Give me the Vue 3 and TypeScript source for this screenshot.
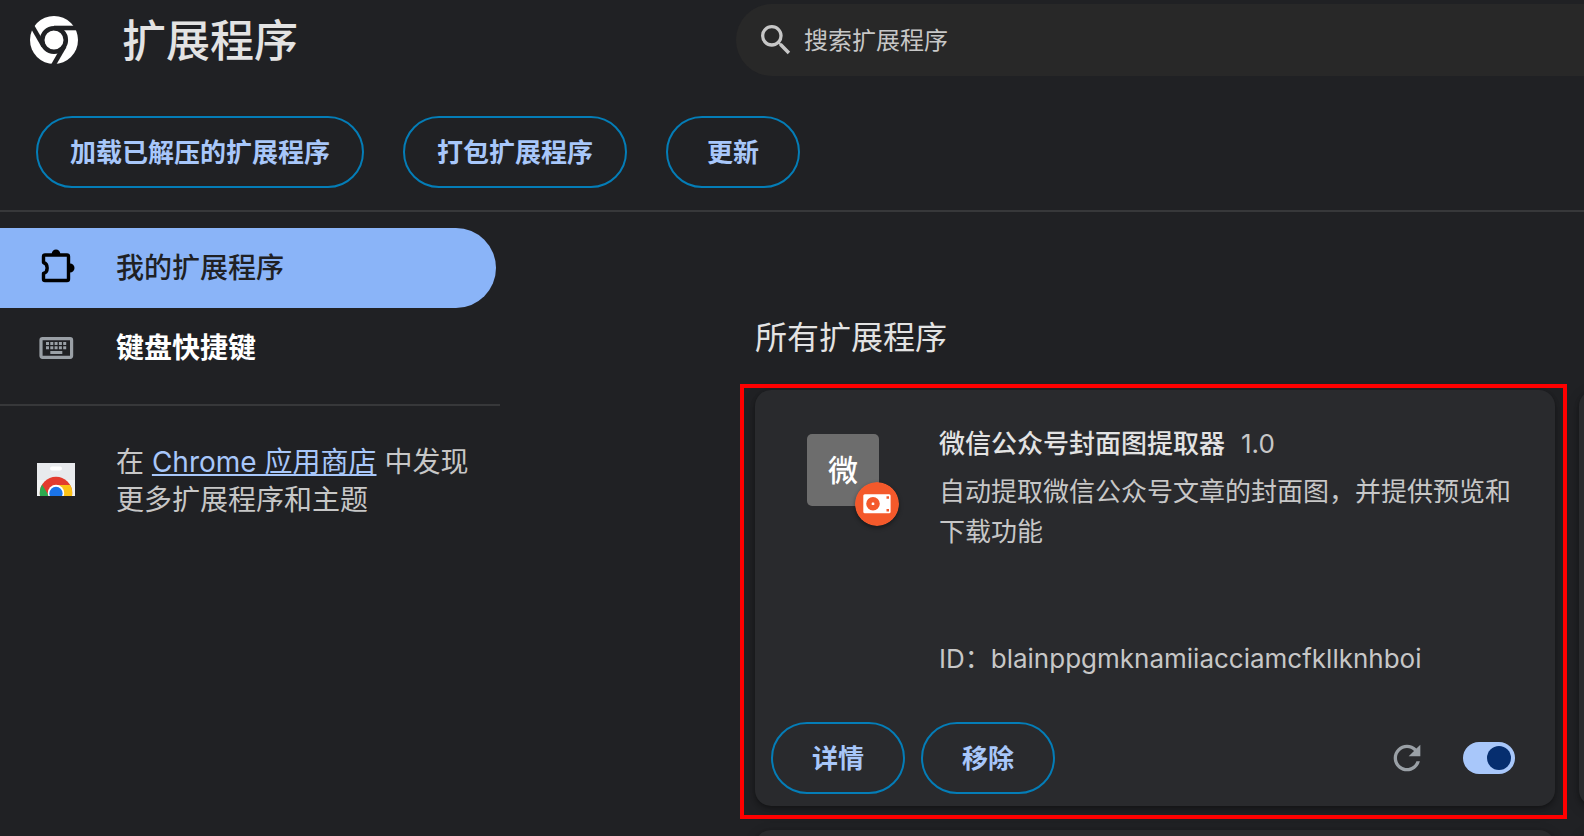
<script setup lang="ts">
import { ref } from 'vue'

interface Extension {
  name: string
  version: string
  description: string
  id: string
  glyph: string
}

const query = ref('')
const enabled = ref(true)
const actions: string[] = ['加载已解压的扩展程序', '打包扩展程序', '更新']
const extension: Extension = {
  name: '微信公众号封面图提取器',
  version: '1.0',
  description: '自动提取微信公众号文章的封面图，并提供预览和下载功能',
  id: 'blainppgmknamiiacciamcfkllknhboi',
  glyph: '微',
}
</script>

<template>
  <div class="page">
    <header class="header">
      <div class="brand">
        <svg class="logo" viewBox="-24 -24 48 48" aria-hidden="true">
          <circle r="24" fill="#fff" />
          <g fill="none" stroke="#202124" stroke-width="4.6">
            <circle r="11.8" />
            <path d="M0-12H25" />
            <path d="M0-12H25" transform="rotate(120)" />
            <path d="M0-12H25" transform="rotate(240)" />
          </g>
        </svg>
        <h1>扩展程序</h1>
      </div>
      <label class="search">
        <svg viewBox="0 0 24 24" aria-hidden="true">
          <path fill="#c7c7c7" d="M15.5 14h-.79l-.28-.27A6.47 6.47 0 0 0 16 9.5 6.5 6.5 0 1 0 9.5 16c1.61 0 3.09-.59 4.23-1.57l.27.28v.79l5 4.99L20.49 19l-4.99-5zm-6 0C7.01 14 5 11.99 5 9.5S7.01 5 9.5 5 14 7.01 14 9.5 11.99 14 9.5 14z" />
        </svg>
        <input v-model="query" type="text" placeholder="搜索扩展程序" aria-label="搜索扩展程序" />
      </label>
    </header>

    <div class="toolbar">
      <button v-for="label in actions" :key="label" type="button" class="pill">{{ label }}</button>
    </div>

    <div class="body">
      <aside class="sidebar">
        <nav>
          <a href="#extensions" class="nav-item active">
            <svg viewBox="0 2 36 36" aria-hidden="true">
              <path fill="none" stroke="#000" stroke-width="3.4" stroke-linejoin="round" d="M5 7H27A1.5 1.5 0 0 1 28.5 8.5V31A1.5 1.5 0 0 1 27 32.500H5A1.5 1.5 0 0 1 3.500 31V25.500C8.400 24 8.400 16 3.500 14.500V8.500A1.5 1.5 0 0 1 5 7Z" />
              <path d="M11.700 6a4.300 4.500 0 0 1 8.600 0ZM30 15.500a4.500 4.500 0 0 1 0 9Z" />
            </svg>
            <span>我的扩展程序</span>
          </a>
          <a href="#shortcuts" class="nav-item">
            <svg viewBox="0 0 36 36" aria-hidden="true">
              <rect x="1" y="8.700" width="30.600" height="18.600" rx="1.500" fill="none" stroke="#9aa0a6" stroke-width="3.200" />
              <g fill="#9aa0a6">
                <path d="M6 12h3v3H6zM10.300 12h3v3h-3zM14.600 12h3v3h-3zM18.900 12h3v3h-3zM23.200 12h3v3h-3z" />
                <path d="M6 16.200h3v3H6zM10.300 16.200h3v3h-3zM14.600 16.200h3v3h-3zM18.900 16.200h3v3h-3zM23.200 16.200h3v3h-3z" />
                <path d="M10.300 21h12v3h-12z" />
              </g>
            </svg>
            <span>键盘快捷键</span>
          </a>
        </nav>
        <div class="discover">
          <svg viewBox="0 0 38 33" aria-hidden="true">
            <defs>
              <clipPath id="wheel"><circle cx="19" cy="30" r="16.200" /></clipPath>
            </defs>
            <path fill="#f1f3f4" d="M0 0h38v33H0z" />
            <path fill="#e8eaed" d="M0 0h38v17H0z" />
            <rect x="13" y="3.500" width="12" height="4" rx="2" fill="#fff" />
            <g clip-path="url(#wheel)">
              <path fill="#e33b2e" d="M0 10h38v23H0z" />
              <path fill="#fbc116" d="M19 22h19v11H19z" />
              <path fill="#2da94f" d="M0 17 5 21.500 12 33H0z" />
            </g>
            <circle cx="19" cy="30" r="8.200" fill="#fff" />
            <circle cx="19" cy="30.300" r="6.600" fill="#1a73e8" />
          </svg>
          <p>在 <a href="#webstore">Chrome 应用商店</a> 中发现<br />更多扩展程序和主题</p>
        </div>
      </aside>

      <main class="content">
        <h2>所有扩展程序</h2>
        <div class="grid">
          <article class="card">
            <div class="summary">
              <div class="icon">
                <span>{{ extension.glyph }}</span>
                <svg class="badge" viewBox="0 0 44 44" aria-hidden="true">
                  <circle cx="22" cy="22" r="22" fill="#f4592b" />
                  <rect x="8.300" y="12.300" width="27.300" height="19" rx="1.500" fill="#fff" />
                  <circle cx="18" cy="21.800" r="6.800" fill="#f4592b" />
                  <rect x="16.700" y="20.500" width="2.600" height="2.600" rx=".6" fill="#fff" />
                  <path fill="#f4592b" d="M31.500 14.200h2.500v2.500h-2.500zM31.500 27h2.500v2.500h-2.500z" />
                </svg>
              </div>
              <div class="details">
                <h3>{{ extension.name }}<span>{{ extension.version }}</span></h3>
                <p class="description">{{ extension.description }}</p>
                <p class="identifier">ID：{{ extension.id }}</p>
              </div>
            </div>
            <div class="controls">
              <button type="button" class="pill">详情</button>
              <button type="button" class="pill">移除</button>
              <button type="button" class="reload" aria-label="重新加载">
                <svg viewBox="0 0 24 24" aria-hidden="true">
                  <path fill="#9aa0a6" d="M17.650 6.350C16.200 4.900 14.210 4 12 4c-4.420 0-7.990 3.580-7.990 8s3.570 8 7.990 8c3.730 0 6.840-2.550 7.730-6h-2.080c-.82 2.330-3.040 4-5.650 4-3.310 0-6-2.690-6-6s2.690-6 6-6c1.660 0 3.140.69 4.220 1.780L13 11h7V4l-2.350 2.350z" />
                </svg>
              </button>
              <input v-model="enabled" type="checkbox" role="switch" class="toggle" aria-label="启用" />
            </div>
            <div class="highlight"></div>
          </article>
          <article class="card"></article>
          <article class="card"></article>
          <article class="card"></article>
        </div>
      </main>
    </div>
  </div>
</template>

<style>
html,
body {
  margin: 0;
  background: #202124;
}
</style>

<style scoped>
.page {
  box-sizing: border-box;
  height: 100vh;
  display: flex;
  flex-direction: column;
  overflow: hidden;
  background: #202124;
  color: #e3e3e3;
  font-family: Inter, "Noto Sans CJK SC", sans-serif;
  font-size: 26px;
}

h1,
h2,
h3,
p {
  margin: 0;
}

button,
input {
  font: inherit;
}

.header {
  display: flex;
  align-items: center;
  height: 80px;
}

.brand {
  box-sizing: border-box;
  flex: 0 0 736px;
  display: flex;
  align-items: center;
  gap: 44px;
  padding-left: 30px;
}

.logo {
  width: 48px;
  height: 48px;
}

h1 {
  padding-top: 2px;
  font-size: 44px;
  line-height: 64px;
  font-weight: 500;
}

.search {
  flex: 1;
  display: flex;
  align-items: center;
  gap: 8px;
  height: 72px;
  padding-left: 20px;
  border-radius: 36px 0 0 36px;
  background: #282828;
}

.search svg {
  width: 40px;
  height: 40px;
}

.search input {
  flex: 1;
  min-width: 0;
  padding: 2px 0 0;
  border: 0;
  outline: 0;
  background: none;
  color: #e3e3e3;
  font-size: 24px;
  line-height: 36px;
}

.search input::placeholder {
  color: #c7c7c7;
  opacity: 1;
}

.toolbar {
  display: flex;
  gap: 39px;
  padding: 36px 36px 22px;
  border-bottom: 2px solid #37383a;
}

.pill {
  box-sizing: border-box;
  min-width: 134px;
  height: 72px;
  padding: 0 32px 4px;
  border: 2px solid #047db7;
  border-radius: 36px;
  background: transparent;
  color: #a8c7fa;
  font-size: 26px;
  font-weight: 700;
  white-space: nowrap;
}

.body {
  flex: 1;
  min-height: 0;
  display: flex;
}

.sidebar {
  flex: 0 0 500px;
}

nav {
  padding: 16px 4px 16px 0;
  border-bottom: 2px solid #37383a;
}

.nav-item {
  display: flex;
  align-items: center;
  gap: 40px;
  height: 80px;
  padding-left: 40px;
  color: #fff;
  font-size: 28px;
  font-weight: 700;
  text-decoration: none;
}

.nav-item svg {
  width: 36px;
  height: 36px;
  overflow: visible;
}

.nav-item span {
  padding-bottom: 4px;
}

.nav-item.active {
  border-radius: 0 40px 40px 0;
  background: #8ab4f8;
  color: #202124;
  font-weight: 500;
}

.discover {
  display: flex;
  align-items: center;
  gap: 41px;
  padding: 37px 24px 0 37px;
  color: #c7c7c7;
  font-size: 28px;
  line-height: 38px;
}

.discover svg {
  flex: none;
  width: 38px;
  height: 33px;
  margin-bottom: 4px;
}

.discover p {
  white-space: nowrap;
}

.discover a {
  color: #a8c7fa;
  text-decoration-thickness: 2px;
  text-underline-offset: 2px;
  text-decoration-skip-ink: none;
}

.content {
  flex: 1;
  min-width: 0;
  padding: 106px 0 0 255px;
}

h2 {
  margin-bottom: 32px;
  font-size: 32px;
  line-height: 40px;
  font-weight: 400;
}

.grid {
  display: grid;
  grid-template-columns: repeat(2, minmax(800px, 1fr));
  gap: 24px;
}

.card {
  position: relative;
  box-sizing: border-box;
  display: flex;
  flex-direction: column;
  min-height: 416px;
  padding: 32px 16px 12px;
  border-radius: 16px;
  background: #292a2d;
  box-shadow: 0 2px 4px rgba(0, 0, 0, 0.3), 0 4px 12px 2px rgba(0, 0, 0, 0.15);
}

.summary {
  flex: 1;
  display: flex;
  gap: 60px;
  padding: 0 24px 0 36px;
}

.icon {
  position: relative;
  flex: none;
  display: flex;
  align-items: center;
  justify-content: center;
  width: 72px;
  height: 72px;
  margin-top: 12px;
  border-radius: 5px;
  background: #6d6d6d;
  color: #fff;
  font-size: 30px;
  font-weight: 500;
}

.icon span {
  padding-bottom: 5px;
}

.badge {
  position: absolute;
  right: -20px;
  bottom: -20px;
  width: 44px;
  height: 44px;
  border-radius: 50%;
  box-shadow: 0 2px 4px rgba(0, 0, 0, 0.4);
}

.details {
  flex: 1;
  min-width: 0;
  display: flex;
  flex-direction: column;
  padding-top: 2px;
  color: #c7c7c7;
  line-height: 40px;
}

h3 {
  margin-bottom: 8px;
  color: #e3e3e3;
  font-size: 26px;
  font-weight: 500;
}

h3 span {
  margin-left: 16px;
  color: #c7c7c7;
  font-weight: 400;
}

.identifier {
  margin-top: auto;
  margin-bottom: 43px;
}

.controls {
  display: flex;
  align-items: center;
  gap: 16px;
}

.reload {
  width: 40px;
  height: 40px;
  margin-left: auto;
  padding: 0;
  border: 0;
  background: none;
}

.reload svg {
  display: block;
}

.toggle {
  appearance: none;
  display: flex;
  align-items: center;
  box-sizing: border-box;
  width: 52px;
  height: 32px;
  margin: 0 24px 0 20px;
  padding: 4px;
  border-radius: 16px;
  background: #5f6368;
}

.toggle::before {
  content: "";
  width: 24px;
  height: 24px;
  border-radius: 50%;
  background: #c7c7c7;
}

.toggle:checked {
  justify-content: flex-end;
  background: #a8c7fa;
}

.toggle:checked::before {
  background: #062e6f;
}

.highlight {
  position: absolute;
  inset: -6px -12px -13px -15px;
  border: 4px solid #f00;
  pointer-events: none;
}
</style>
